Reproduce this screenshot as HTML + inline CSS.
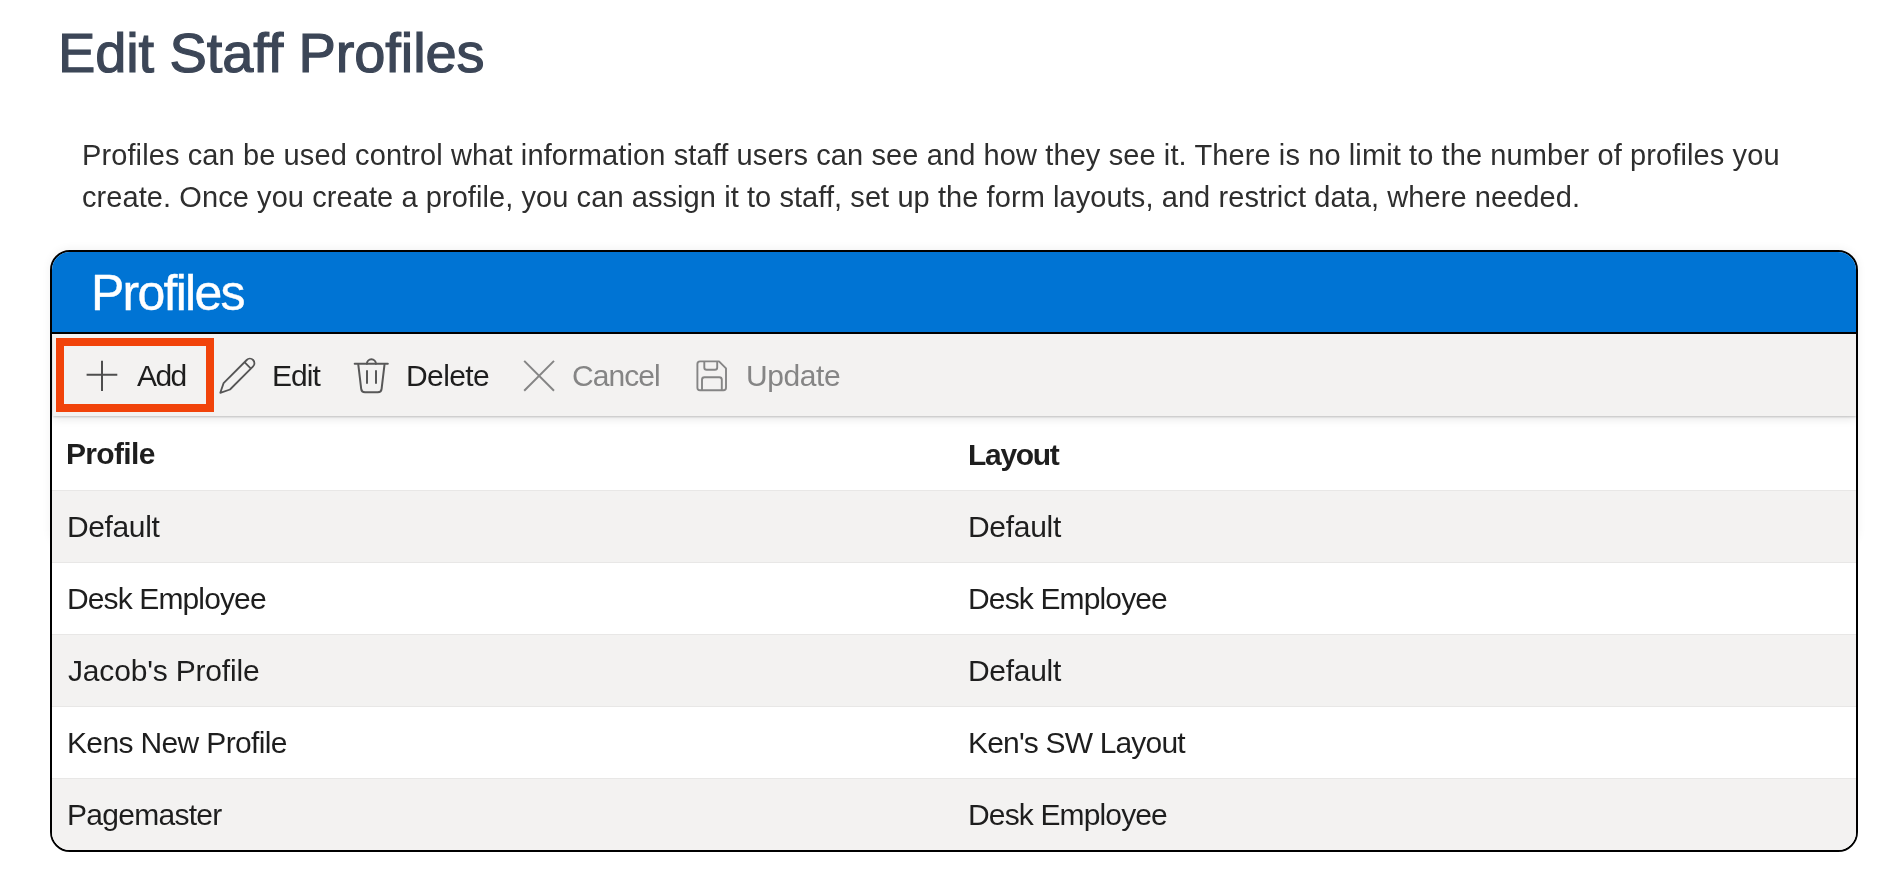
<!DOCTYPE html>
<html><head><meta charset="utf-8">
<style>
html,body{margin:0;padding:0;background:#fff;width:1902px;height:880px;overflow:hidden;font-family:"Liberation Sans",sans-serif;}
.t{position:absolute;white-space:nowrap;will-change:transform;font-variant-ligatures:none;}
.b{position:absolute;}
</style></head><body>
<div class="t" style="left:58.0px;top:17.7px;font-size:56px;line-height:70.0px;letter-spacing:-0.111px;color:#3c4657;-webkit-text-stroke:1.2px #3c4657;">Edit Staff Profiles</div>
<div class="t" style="left:81.8px;top:136.8px;font-size:29px;line-height:36.25px;letter-spacing:0.106px;color:#2e2e2e;">Profiles can be used control what information staff users can see and how they see it. There is no limit to the number of profiles you</div>
<div class="t" style="left:82.0px;top:178.9px;font-size:29px;line-height:36.25px;letter-spacing:0.076px;color:#2e2e2e;">create. Once you create a profile, you can assign it to staff, set up the form layouts, and restrict data, where needed.</div>
<div class="b" style="left:50px;top:250px;width:1808px;height:300px;border-radius:20px;box-shadow:0 -1px 10px rgba(0,0,0,0.06);"></div>
<div class="b" style="left:50px;top:250px;width:1808px;height:602px;box-sizing:border-box;border:2px solid #000;border-radius:20px;overflow:hidden;background:#fff;">
 <div class="b" style="left:0;top:0;width:1804px;height:80px;background:#0074d4;"></div>
 <div class="b" style="left:0;top:80px;width:1804px;height:2px;background:#000;"></div>
 <div class="b" style="left:1px;top:82px;width:1803px;height:82px;background:#f3f2f1;box-shadow:0 1px 2px rgba(0,0,0,0.2),0 4px 8px rgba(0,0,0,0.08);"></div>
 <div class="b" style="left:0;top:238px;width:1804px;height:72px;background:#f3f2f1;border-top:1px solid #e8e7e6;box-sizing:border-box;"></div>
 <div class="b" style="left:0;top:310px;width:1804px;height:72px;background:#fff;border-top:1px solid #e8e7e6;box-sizing:border-box;"></div>
 <div class="b" style="left:0;top:382px;width:1804px;height:72px;background:#f3f2f1;border-top:1px solid #e8e7e6;box-sizing:border-box;"></div>
 <div class="b" style="left:0;top:454px;width:1804px;height:72px;background:#fff;border-top:1px solid #e8e7e6;box-sizing:border-box;"></div>
 <div class="b" style="left:0;top:526px;width:1804px;height:74px;background:#f3f2f1;border-top:1px solid #e8e7e6;box-sizing:border-box;"></div>
</div>
<div class="t" style="left:90.8px;top:262.0px;font-size:50px;line-height:62.5px;letter-spacing:-1.743px;color:#ffffff;-webkit-text-stroke:0.4px #ffffff;">Profiles</div>
<div class="b" style="left:56px;top:338px;width:158px;height:74px;box-sizing:border-box;border:8px solid #f1430a;"></div>
<div class="t" style="left:137.0px;top:357.0px;font-size:30px;line-height:37.5px;letter-spacing:-1.600px;color:#1e1e1e;">Add</div>
<div class="t" style="left:271.9px;top:357.0px;font-size:30px;line-height:37.5px;letter-spacing:-0.967px;color:#1e1e1e;">Edit</div>
<div class="t" style="left:405.7px;top:357.0px;font-size:30px;line-height:37.5px;letter-spacing:-0.600px;color:#1e1e1e;">Delete</div>
<div class="t" style="left:572.3px;top:357.2px;font-size:30px;line-height:37.5px;letter-spacing:-0.920px;color:#858585;">Cancel</div>
<div class="t" style="left:745.9px;top:356.8px;font-size:30px;line-height:37.5px;letter-spacing:-0.400px;color:#858585;">Update</div>
<div class="t" style="left:66.3px;top:434.9px;font-size:30px;line-height:37.5px;letter-spacing:-0.667px;color:#1e1e1e;font-weight:700;">Profile</div>
<div class="t" style="left:968.0px;top:435.5px;font-size:30px;line-height:37.5px;letter-spacing:-1.300px;color:#1e1e1e;font-weight:700;">Layout</div>
<div class="t" style="left:67.3px;top:508.4px;font-size:30px;line-height:37.5px;letter-spacing:-0.383px;color:#1e1e1e;">Default</div>
<div class="t" style="left:66.5px;top:580.4px;font-size:30px;line-height:37.5px;letter-spacing:-0.875px;color:#1e1e1e;">Desk Employee</div>
<div class="t" style="left:67.5px;top:652.4px;font-size:30px;line-height:37.5px;letter-spacing:-0.179px;color:#1e1e1e;">Jacob's Profile</div>
<div class="t" style="left:66.5px;top:724.4px;font-size:30px;line-height:37.5px;letter-spacing:-0.640px;color:#1e1e1e;">Kens New Profile</div>
<div class="t" style="left:66.5px;top:796.4px;font-size:30px;line-height:37.5px;letter-spacing:-0.722px;color:#1e1e1e;">Pagemaster</div>
<div class="t" style="left:967.5px;top:508.4px;font-size:30px;line-height:37.5px;letter-spacing:-0.300px;color:#1e1e1e;">Default</div>
<div class="t" style="left:967.5px;top:580.4px;font-size:30px;line-height:37.5px;letter-spacing:-0.858px;color:#1e1e1e;">Desk Employee</div>
<div class="t" style="left:967.5px;top:652.4px;font-size:30px;line-height:37.5px;letter-spacing:-0.300px;color:#1e1e1e;">Default</div>
<div class="t" style="left:967.5px;top:724.4px;font-size:30px;line-height:37.5px;letter-spacing:-0.829px;color:#1e1e1e;">Ken's SW Layout</div>
<div class="t" style="left:967.5px;top:796.4px;font-size:30px;line-height:37.5px;letter-spacing:-0.858px;color:#1e1e1e;">Desk Employee</div>
<svg class="b" style="left:0;top:0" width="1902" height="880" viewBox="0 0 1902 880" fill="none">
 <g stroke="#4e4e4e" stroke-width="2">
  <path d="M86.6 374.7H117.3M102 360.8V390.9"/>
 </g>
 <g stroke="#555" stroke-width="1.8" stroke-linejoin="round">
  <path d="M220.3 392.8L223.6 383.1L246.7 360.0A4.5 4.5 0 0 1 253.1 366.4L230.0 389.5Z M244.5 362.2L250.9 368.6"/>
 </g>
 <g stroke="#585858" stroke-width="2" stroke-linecap="round" stroke-linejoin="round">
  <path d="M354.7 363.8H387.8"/>
  <path d="M366.9 363.8A4.5 4.5 0 0 1 375.9 363.8"/>
  <path d="M358.3 364.7L361.2 388.8Q361.6 392.3 365 392.3H377.8Q381.2 392.3 381.6 388.8L384.5 364.7"/>
  <path d="M367 371V383M376 371V383"/>
 </g>
 <g stroke="#858585" stroke-width="2">
  <path d="M524.2 360.9L554 390.7M554 360.9L524.2 390.7"/>
 </g>
 <g stroke="#858585" stroke-width="1.9" stroke-linejoin="round">
  <path d="M700 361.4H719L726 368.4V387.8Q726 390.3 723.5 390.3H700Q697.4 390.3 697.4 387.8V364Q697.4 361.4 700 361.4Z"/>
  <path d="M704.3 361.4V367.5Q704.3 369.8 706.6 369.8H714.9Q717.2 369.8 717.2 367.5V361.4"/>
  <path d="M702 390.3V379.7Q702 377.2 704.5 377.2H719.3Q721.8 377.2 721.8 379.7V390.3"/>
 </g>
</svg>
</body></html>
